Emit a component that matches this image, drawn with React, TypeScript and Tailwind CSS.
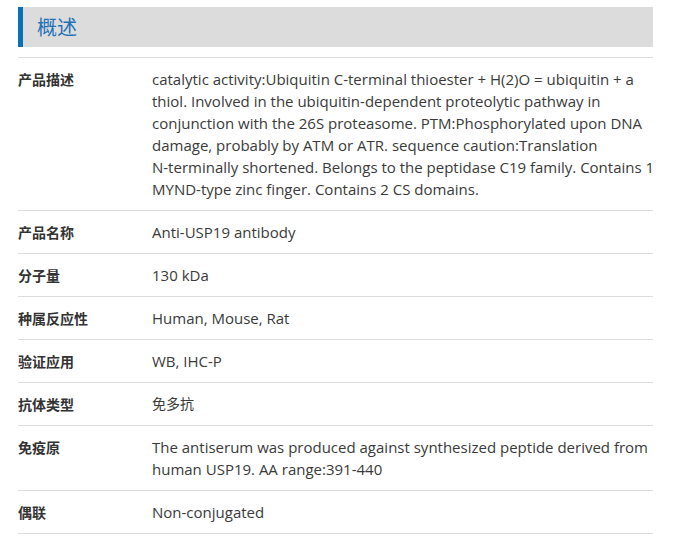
import React from "react";

const rows: { label: string; value: React.ReactNode }[] = [
  {
    label: "产品描述",
    value: (
      <>
        catalytic activity:Ubiquitin C-terminal thioester + H(2)O = ubiquitin + a
        <br />
        thiol. Involved in the ubiquitin-dependent proteolytic pathway in
        <br />
        conjunction with the 26S proteasome. PTM:Phosphorylated upon DNA
        <br />
        damage, probably by ATM or ATR. sequence caution:Translation
        <br />
        N-terminally shortened. Belongs to the peptidase C19 family. Contains 1
        <br />
        MYND-type zinc finger. Contains 2 CS domains.
      </>
    ),
  },
  { label: "产品名称", value: "Anti-USP19 antibody" },
  { label: "分子量", value: "130 kDa" },
  { label: "种属反应性", value: "Human, Mouse, Rat" },
  { label: "验证应用", value: "WB, IHC-P" },
  { label: "抗体类型", value: <div className="text-[14px] leading-[22px]">免多抗</div> },
  {
    label: "免疫原",
    value: (
      <>
        The antiserum was produced against synthesized peptide derived from
        <br />
        human USP19. AA range:391-440
      </>
    ),
  },
  { label: "偶联", value: "Non-conjugated" },
];

export default function App() {
  return (
    <div className="bg-white w-[673px] h-[540px] overflow-hidden">
      <div className="ml-[18px] w-[635px] pt-[7px]">
        <div className="h-[40px] bg-[#dcdcdc] border-l-[5px] border-[#0b6fba] flex items-center pl-[14px]">
          <span
            className="text-[20px] text-[#1f72b6]"
            style={{ fontFamily: '"Noto Sans CJK SC", sans-serif' }}
          >
            概述
          </span>
        </div>
        <div className="mt-[10px] border-t border-[#dddddd]">
          {rows.map((r) => (
            <div
              key={r.label}
              className="flex border-b border-[#dddddd] py-[10px]"
            >
              <div
                className="w-[134px] shrink-0 text-[14px] leading-[22px] font-bold text-[#333333]"
                style={{ fontFamily: '"Noto Sans CJK SC", sans-serif' }}
              >
                {r.label}
              </div>
              <div
                className="flex-1 text-[15px] leading-[22px] text-[#3a3a3a] whitespace-nowrap"
                style={{ fontFamily: '"Open Sans", "Noto Sans CJK SC", sans-serif' }}
              >
                {r.value}
              </div>
            </div>
          ))}
        </div>
      </div>
    </div>
  );
}
